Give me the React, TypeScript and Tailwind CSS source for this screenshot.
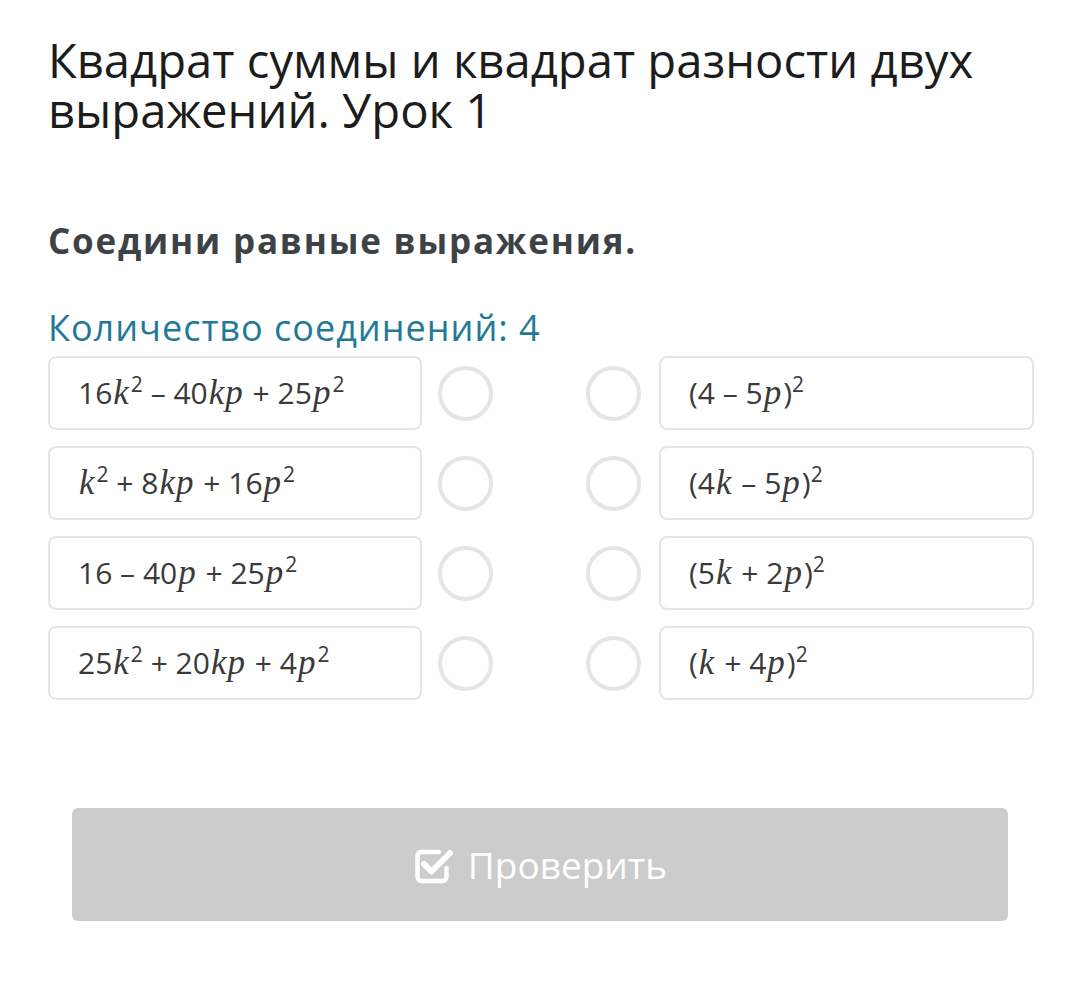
import React from 'react';

const sans = { fontFamily: '"Open Sans", "Noto Sans", sans-serif' };

type Part = { t: string; v?: boolean; sup?: boolean };

const v = (t: string): Part => ({ t, v: true });
const n = (t: string): Part => ({ t });
const s = (t: string): Part => ({ t, sup: true });

const LEFT: Part[][] = [
  [n('16'), v('k'), s('2'), n(' – 40'), v('kp'), n(' + 25'), v('p'), s('2')],
  [v('k'), s('2'), n(' + 8'), v('kp'), n(' + 16'), v('p'), s('2')],
  [n('16 – 40'), v('p'), n(' + 25'), v('p'), s('2')],
  [n('25'), v('k'), s('2'), n(' + 20'), v('kp'), n(' + 4'), v('p'), s('2')],
];

const RIGHT: Part[][] = [
  [n('(4 – 5'), v('p'), n(')'), s('2')],
  [n('(4'), v('k'), n(' – 5'), v('p'), n(')'), s('2')],
  [n('(5'), v('k'), n(' + 2'), v('p'), n(')'), s('2')],
  [n('('), v('k'), n(' + 4'), v('p'), n(')'), s('2')],
];

function Expr({ parts }: { parts: Part[] }) {
  return (
    <span className="whitespace-pre text-[30px] leading-none text-[#3a3a3a]">
      {parts.map((p, i) =>
        p.v ? (
          <span
            key={i}
            className="px-[1px] text-[35px] italic tracking-[1px]"
            style={{ fontFamily: '"Liberation Serif", "DejaVu Serif", serif' }}
          >
            {p.t}
          </span>
        ) : p.sup ? (
          <span key={i} className="relative -top-[12px] text-[21px]">
            {p.t}
          </span>
        ) : (
          <span key={i}>{p.t}</span>
        ),
      )}
    </span>
  );
}

function Box({ parts }: { parts: Part[] }) {
  return (
    <div className="flex h-[74px] w-[375px] items-center rounded-lg border-2 border-[#e3e6e8] bg-white pb-[2px] pl-[28px]">
      <Expr parts={parts} />
    </div>
  );
}

function Dot() {
  return <div className="h-[55px] w-[55px] rounded-full border-[4px] border-[#e2e6e8]" />;
}

function CheckIcon() {
  return (
    <svg width="42" height="38" viewBox="0 0 42 38" fill="none">
      <path
        d="M26 6H8.5a4 4 0 0 0-4 4v21a4 4 0 0 0 4 4h21a4 4 0 0 0 4-4v-9"
        stroke="white"
        strokeWidth="4.5"
        strokeLinecap="round"
      />
      <path
        d="M11 18l7.5 7.5L37 7"
        stroke="white"
        strokeWidth="6"
        strokeLinecap="round"
        strokeLinejoin="round"
      />
    </svg>
  );
}

export default function App() {
  return (
    <div className="min-h-[1003px] w-[1080px] bg-white" style={sans}>
      <div className="pl-[48px] pr-[46px] pt-[35px]">
        <h1 className="text-[47.2px] font-normal leading-[50px] text-[#1c1c1c]">
          Квадрат суммы и квадрат разности двух выражений. Урок 1
        </h1>
        <h2 className="mt-[86px] text-[35px] font-bold leading-[40px] tracking-[1.8px] text-[#3d4247]">
          Соедини равные выражения.
        </h2>
        <p className="mt-[46px] text-[36px] leading-[42px] tracking-[1px] text-[#1f7a99]">
          Количество соединений: 4
        </p>
        <div className="mt-[7px] flex flex-col gap-[16px]">
          {LEFT.map((left, i) => (
            <div key={i} className="flex items-center">
              <Box parts={left} />
              <div className="ml-[16px]">
                <Dot />
              </div>
              <div className="ml-[93px]">
                <Dot />
              </div>
              <div className="ml-[18px]">
                <Box parts={RIGHT[i]} />
              </div>
            </div>
          ))}
        </div>
      </div>
      <div className="px-[72px] pt-[108px]">
        <button className="flex h-[113px] w-full items-center justify-center gap-[13px] rounded-md bg-[#cccccc] text-[37px] text-white">
          <CheckIcon />
          <span>Проверить</span>
        </button>
      </div>
    </div>
  );
}
